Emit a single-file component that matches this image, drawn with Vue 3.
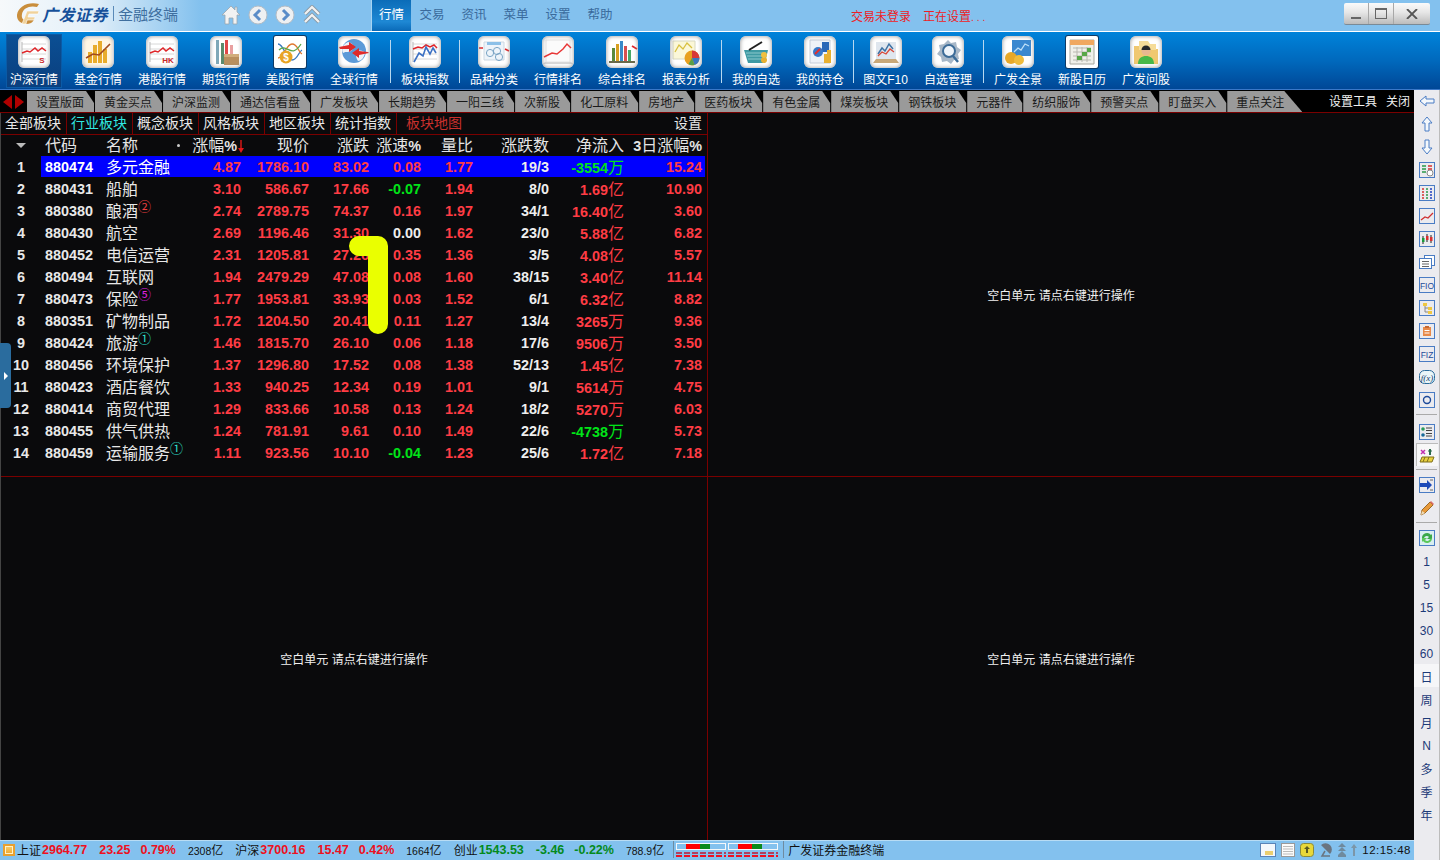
<script setup>
const gridLines = '<path d="M4 8H28M4 13H28M4 18H28M4 23H28" stroke="#d8d8d8"/><path d="M4 6V26" stroke="#bbb"/>'
const redLine = '<path d="M4 17l5-2 3 1 5-4 3 3 4-3 4 3" fill="none" stroke="#e0262a" stroke-width="1.5"/>'
const tag = (t, x) => `<text x="${x}" y="27" font-size="8" font-weight="700" fill="#c8282a" font-family="Liberation Sans" text-anchor="middle">${t}</text>`

const icons = {
  hs: gridLines + redLine + tag('S', 24),
  fund: '<rect x="2" y="2" width="28" height="28" fill="#fff6e4"/><g fill="#e8ac2c"><rect x="6" y="16" width="4" height="11"/><rect x="11" y="9" width="4" height="18"/><rect x="16" y="5" width="4" height="22"/><rect x="21" y="13" width="4" height="14"/></g><path d="M4 22l7-4 6 1 6-6 5-5" fill="none" stroke="#a04a20" stroke-width="1.6"/>',
  hk: gridLines + redLine + tag('HK', 22),
  fut: '<rect x="6" y="4" width="3" height="24" fill="#7fa8b8"/><rect x="11" y="7" width="3" height="21" fill="#5b8a6c"/><rect x="15" y="4" width="3" height="14" fill="#e04848"/><rect x="20" y="9" width="3" height="10" fill="#e8a0a0"/><path d="M14 18h15v11H14z" fill="#b98f5e"/><path d="M14 18h15v3H14z" fill="#d2ad7c"/>',
  us: '<path d="M4 8c6 0 8 16 14 16s6-8 10-10" fill="none" stroke="#3a7ac0" stroke-width="1.3"/><path d="M4 22c6 0 8-14 14-14s6 8 10 10" fill="none" stroke="#e07830" stroke-width="1.3"/><path d="M5 14c8-8 12 10 22-6" fill="none" stroke="#5aa84a" stroke-width="1.3"/><circle cx="12" cy="21" r="6.5" fill="#e8a424"/><text x="12" y="24.5" font-size="10" font-weight="700" fill="#fff" font-family="Liberation Sans" text-anchor="middle">$</text>',
  world: '<circle cx="16" cy="15" r="12" fill="#5b9ad8"/><path d="M10 6c5 1 7 5 4 8s-6 1-9 3c-2-4 0-9 5-11zM19 15c4-1 7 0 8 2-1 5-4 8-7 8-2-3-3-7-1-10z" fill="#eef3f8"/><path d="M1 11l10-2v-3l7 5-7 5v-3H2zM31 17l-10 2v3l-7-5 7-5v3l9 1z" fill="#e02a2a"/>',
  block: gridLines + '<path d="M4 13l5-2 4 1 4-3 4 2 4-2 3 3" fill="none" stroke="#e0262a" stroke-width="1.5"/><path d="M5 26l5-9 4 3 3-9 4 7 3-6 3 5" fill="none" stroke="#3e72c4" stroke-width="1.6"/>',
  kind: '<path d="M6 6h20v18H6z" fill="#eef4fa" stroke="#cdd8e2"/><path d="M9 6h14v3H9z" fill="#8cc0e8"/><circle cx="12" cy="17" r="3.6" fill="none" stroke="#7aa4c4"/><circle cx="19" cy="15" r="3.6" fill="none" stroke="#7aa4c4"/><circle cx="21" cy="21" r="3.6" fill="none" stroke="#7aa4c4"/><path d="M1 12h4M27 13l4 2" stroke="#e0262a" stroke-width="1.6"/>',
  rank: '<path d="M4 4h24v22H4z" fill="#fbfbfb" stroke="#e4e4e4"/><path d="M2 21l8-4 5 1 6-5 4-5 4 4" fill="none" stroke="#e83838" stroke-width="1.5"/><path d="M3 26h26l2 2H1z" fill="#d8d8d8"/>',
  mix: '<g><rect x="6" y="12" width="3" height="14" fill="#5a8a3c"/><rect x="10" y="8" width="3" height="18" fill="#d8a020"/><rect x="14" y="5" width="3" height="21" fill="#3a8ac8"/><rect x="18" y="10" width="3" height="16" fill="#d85050"/><rect x="22" y="14" width="3" height="12" fill="#48a868"/></g><path d="M3 26h26" stroke="#6a6a4a" stroke-width="2"/><path d="M26 10l5 3" stroke="#e0262a" stroke-width="1.6"/>',
  report: '<path d="M3 5h22v18H3z" fill="#fbf7d8" stroke="#d8d8c0"/><path d="M5 16l4-7 4 4 4-6 5 5" fill="none" stroke="#d8c040" stroke-width="1.3"/><circle cx="22" cy="22" r="7.5" fill="#e8a020"/><path d="M22 22V14.5a7.5 7.5 0 0 1 7.5 7.5z" fill="#d83838"/><path d="M22 22h7.5a7.5 7.5 0 0 1-5 7z" fill="#3a78c0"/><path d="M22 22l2.500 7a7.500 7.500 0 0 1-6-1z" fill="#58a048"/>',
  fav: '<path d="M4 14h24l-3 13H8z" fill="#3f9aa4"/><path d="M6 17h20M7 20h18M8 23h16" stroke="#8cc8cc"/><path d="M9 14L22 6" stroke="#222" stroke-width="2"/><circle cx="24" cy="24" r="3" fill="#e8b030"/><circle cx="24" cy="19" r="3" fill="#f0c040"/>',
  hold: '<path d="M6 4h20v23H6z" fill="#eef2f8" stroke="#c4ccd8"/><path d="M18 6h7v10h-7z" fill="#2a68b8"/><circle cx="14" cy="16" r="5" fill="#3878c8"/><path d="M11 18l5-5" stroke="#e03030" stroke-width="2"/><path d="M20 27v-9h3v-4h4v13z" fill="#e8b030"/>',
  f10: '<path d="M6 6h20v17H6z" fill="#dfe6ee"/><path d="M8 18l4-6 3 3 4-7 4 5" fill="none" stroke="#3e72a4" stroke-width="1.5"/><path d="M8 20l4-4 4 2 4-5 4 3" fill="none" stroke="#d84a3a" stroke-width="1.3"/><path d="M6 23h20l3 4H3z" fill="#c8a878"/>',
  manage: '<path d="M16 4l3 3 5-1 1 5 4 3-3 4 1 5-5 1-3 4-4-3-5 1-1-5-4-3 3-4-1-5 5-1z" fill="#a8b8c8"/><circle cx="17" cy="15" r="6" fill="#eef4fa" stroke="#3c6c98" stroke-width="2"/><path d="M21 20l5 6" stroke="#3c6c98" stroke-width="2.500"/>',
  view: '<path d="M10 4h19v16H10z" fill="#3a88d0"/><path d="M12 16l4-4 3 2 4-6 4 2" fill="none" stroke="#bfe0f8" stroke-width="1.300"/><circle cx="9" cy="22" r="6" fill="#e8a828"/><circle cx="17" cy="24" r="5" fill="#f0bc3c"/>',
  cal: '<path d="M4 4h24v24H4z" fill="#f0f0ea" stroke="#a8a8a0"/><path d="M4 4h24v5H4z" fill="#f0a860"/><path d="M7 12h18M7 16h18M7 20h18M7 24h18M11 11v15M16 11v15M21 11v15" stroke="#b8b8b0"/><path d="M16 16h5v4h-5zM11 20h5v4h-5z" fill="#58a848"/><path d="M21 12h4v4h-4z" fill="#58a848"/>',
  ask: '<path d="M4 10h10l2 3h12v15H4z" fill="#f0c870"/><path d="M9 5h9l2 3h6v6H9z" fill="#f6dc98"/><circle cx="16" cy="15" r="4.500" fill="#e8b890"/><path d="M11.500 14a4.500 4.500 0 0 1 9 0z" fill="#282828"/><path d="M8 28c0-6 4-8 8-8s8 2 8 8z" fill="#48b848"/>'
}

const tools = [
  { label: '沪深行情', icon: 'hs', active: true },
  { label: '基金行情', icon: 'fund' },
  { label: '港股行情', icon: 'hk' },
  { label: '期货行情', icon: 'fut' },
  { label: '美股行情', icon: 'us', framed: true },
  { label: '全球行情', icon: 'world', sep: 7 },
  { label: '板块指数', icon: 'block', sep: 5 },
  { label: '品种分类', icon: 'kind' },
  { label: '行情排名', icon: 'rank' },
  { label: '综合排名', icon: 'mix' },
  { label: '报表分析', icon: 'report', sep: 6 },
  { label: '我的自选', icon: 'fav' },
  { label: '我的持仓', icon: 'hold', sep: 3 },
  { label: '图文F10', icon: 'f10', narrow: true },
  { label: '自选管理', icon: 'manage', sep: 6 },
  { label: '广发全景', icon: 'view' },
  { label: '新股日历', icon: 'cal', framed: true },
  { label: '广发问股', icon: 'ask' }
]

const tabs = ['设置版面', '黄金买点', '沪深监测', '通达信看盘', '广发板块', '长期趋势', '一阳三线', '次新股', '化工原料', '房地产', '医药板块', '有色金属', '煤炭板块', '钢铁板块', '元器件', '纺织服饰', '预警买点', '盯盘买入', '重点关注']
const subTabs = ['全部板块', '行业板块', '概念板块', '风格板块', '地区板块', '统计指数', '板块地图']

const rows = [
  ['880474', '多元金融', '', '4.87', '1786.10', '83.02', '0.08', '1.77', '19/3', '-3554', '万', '15.24'],
  ['880431', '船舶', '', '3.10', '586.67', '17.66', '-0.07', '1.94', '8/0', '1.69', '亿', '10.90'],
  ['880380', '酿酒', '②', '2.74', '2789.75', '74.37', '0.16', '1.97', '34/1', '16.40', '亿', '3.60'],
  ['880430', '航空', '', '2.69', '1196.46', '31.30', '0.00', '1.62', '23/0', '5.88', '亿', '6.82'],
  ['880452', '电信运营', '', '2.31', '1205.81', '27.26', '0.35', '1.36', '3/5', '4.08', '亿', '5.57'],
  ['880494', '互联网', '', '1.94', '2479.29', '47.08', '0.08', '1.60', '38/15', '3.40', '亿', '11.14'],
  ['880473', '保险', '⑤', '1.77', '1953.81', '33.93', '0.03', '1.52', '6/1', '6.32', '亿', '8.82'],
  ['880351', '矿物制品', '', '1.72', '1204.50', '20.41', '0.11', '1.27', '13/4', '3265', '万', '9.36'],
  ['880424', '旅游', '①', '1.46', '1815.70', '26.10', '0.06', '1.18', '17/6', '9506', '万', '3.50'],
  ['880456', '环境保护', '', '1.37', '1296.80', '17.52', '0.08', '1.38', '52/13', '1.45', '亿', '7.38'],
  ['880423', '酒店餐饮', '', '1.33', '940.25', '12.34', '0.19', '1.01', '9/1', '5614', '万', '4.75'],
  ['880414', '商贸代理', '', '1.29', '833.66', '10.58', '0.13', '1.24', '18/2', '5270', '万', '6.03'],
  ['880455', '供气供热', '', '1.24', '781.91', '9.61', '0.10', '1.49', '22/6', '-4738', '万', '5.73'],
  ['880459', '运输服务', '①', '1.11', '923.56', '10.10', '-0.04', '1.23', '25/6', '1.72', '亿', '7.18']
]

const markColor = { '②': 'mk-red', '⑤': 'mk-pink', '①': 'mk-cyan' }

function tone(v) {
  if (v.startsWith('-')) return 'down'
  return Number(v) === 0 ? 'flat' : 'up'
}

const quotes = [
  { name: '上证', price: '2964.77', chg: '23.25', pct: '0.79%', vol: '2308', cls: 'q-red' },
  { name: '沪深', price: '3700.16', chg: '15.47', pct: '0.42%', vol: '1664', cls: 'q-red' },
  { name: '创业', price: '1543.53', chg: '-3.46', pct: '-0.22%', vol: '788.9', cls: 'q-green' }
]

const b = 'fill="none" stroke="#4a7cc4"'
const frame = `<rect x=".5" y=".5" width="15" height="15" ${b}/>`
const sideTop = [
  `<path d="M1 8l6-5v3h8v4H7v3z" fill="#f4f8fc" stroke="#4a7cc4"/>`,
  `<path d="M8 1l5 6h-3v8H6V7H3z" fill="#f4f8fc" stroke="#4a7cc4"/>`,
  `<path d="M8 15l5-6h-3V1H6v8H3z" fill="#f4f8fc" stroke="#4a7cc4"/>`,
  frame + '<path d="M3 4h4M3 7h4M3 10h4" stroke="#2a9a4a" stroke-width="1.500"/><path d="M9 4h4M9 7h4" stroke="#d83030" stroke-width="1.500"/><circle cx="11" cy="11" r="3" fill="#fff" stroke="#888"/>',
  frame + '<path d="M3 4h2M3 7h2M3 10h2M3 13h2" stroke="#d83030" stroke-width="1.500"/><path d="M7 4h2M7 7h2M7 10h2M7 13h2" stroke="#2a9a4a" stroke-width="1.500"/><path d="M11 4h2M11 7h2M11 10h2M11 13h2" stroke="#2040c0" stroke-width="1.500"/>',
  frame + '<path d="M2 12l4-3 3 1 5-5" fill="none" stroke="#d03030" stroke-width="1.300"/>',
  frame + '<path d="M4 5v8M8 3v8M12 4v8" stroke="#222"/><rect x="3" y="7" width="2.500" height="4" fill="#1a9a3a"/><rect x="7" y="5" width="2.500" height="4" fill="#d83030"/><rect x="11" y="6" width="2.500" height="4" fill="#d83030"/>',
  '<rect x="5.500" y="1.500" width="10" height="10" fill="#fff" stroke="#4a7cc4"/><rect x=".5" y="4.500" width="12" height="10" fill="#fff" stroke="#4a7cc4"/><path d="M3 7.500h7M3 10h7M3 12.500h7" stroke="#666"/>',
  frame + '<text x="8" y="11.500" font-size="8.500" font-family="Liberation Sans" text-anchor="middle" fill="#1d4a9a">FIO</text>',
  frame + '<path d="M4 3h4v3H4zM9 7h4v3H9zM9 11h4v3H9z" fill="#f0c840"/><path d="M6 6v6h3M6 8h3" fill="none" stroke="#888"/>',
  frame + '<rect x="4" y="4" width="8" height="9" fill="#e88a4a"/><path d="M6 3h4v2H6z" fill="#c86830"/><path d="M5.500 7.500h5M5.500 10h5" stroke="#fff"/>',
  frame + '<text x="8" y="11.500" font-size="8.500" font-family="Liberation Sans" text-anchor="middle" fill="#1d4a9a">FIZ</text>',
  '<rect x=".5" y="1.500" width="15" height="13" rx="5" fill="#eaf6f8" stroke="#2a6a9a"/><text x="8" y="11.500" font-size="9" font-style="italic" font-family="Liberation Serif" text-anchor="middle" fill="#123a6a">f(x)</text>',
  frame + '<circle cx="8" cy="8" r="3.500" fill="none" stroke="#1d4a9a" stroke-width="1.400"/>'
]
const sideMid = [
  frame + '<circle cx="4" cy="5" r="1.800" fill="#2a9a5a"/><circle cx="4" cy="11" r="1.800" fill="#1a6a9a"/><path d="M7 4h6M7 6.500h6M7 9.500h6M7 12h6" stroke="#444"/>',
  '<path d="M2 3l4 4M6 3L2 7" stroke="#c030b0" stroke-width="1.500"/><path d="M11 2v6" stroke="#2a6a4a" stroke-width="2"/><path d="M9 4h4" stroke="#2a6a4a"/><path d="M3 10h12l-2 5H1z" fill="#e8d040" stroke="#80701a"/><path d="M6 10l-2 5M10 10l-2 5" stroke="#80701a"/>'
]
const sideLow = [
  frame + '<path d="M1 6h7V3l5 5-5 5v-3H1z" fill="#1d4ab8"/><path d="M11 3h3M11 13h3" stroke="#666"/>',
  '<path d="M2 15l1-5L11 2l3 3-8 8z" fill="#e89a3a" stroke="#9a6a2a"/><path d="M11 2l3 3 1-1-3-3z" fill="#e06a6a"/><path d="M2 15l1-4 3 2z" fill="#f0dcb8"/>'
]
const refresh = frame + '<rect x="1" y="1" width="14" height="14" fill="#d8eef0"/><path d="M3 8a5 5 0 0 1 9-3l1-1v5H8l2-2a3 3 0 0 0-5 1z" fill="#3aa84a"/><path d="M13 8a5 5 0 0 1-9 3l-1 1V8h5l-2 2a3 3 0 0 0 5-1z" fill="#5ac85a"/>'
const periods = ['1', '5', '15', '30', '60', '日', '周', '月', 'N', '多', '季', '年']
</script>

<template>
  <div class="app">
    <header class="titlebar">
      <div class="brand">
        <svg class="logo" width="26" height="26" viewBox="0 0 26 26">
          <path d="M24 3C14 0 3 5 2 14c-.5 7 7 11 14 8 2-1 3-3 4-6h-6l-1 3c-4 1-7-1-6-6 1-6 8-9 15-7z" fill="#c98e3c"/>
          <path d="M12 10h12l-1 3h-9l-1 3h7l-1 3h-7l-1 4H7z" fill="#f0d29a" stroke="#fff" stroke-width=".6"/>
        </svg>
        <span class="brand-name">广发证券</span>
        <span class="brand-line"></span>
        <span class="brand-sub">金融终端</span>
      </div>
      <div class="nav-icons">
        <svg width="20" height="20" viewBox="0 0 20 20"><path d="M10 1L1 10h3v9h4v-6h4v6h4v-9h3l-3-3V2h-2v3z" fill="#f2f2f2" stroke="#9aa6ae" stroke-width=".8"/></svg>
        <svg width="20" height="20" viewBox="0 0 20 20"><circle cx="10" cy="10" r="9" fill="#eef0f2" stroke="#b4bcc4"/><path d="M12 5l-5 5 5 5" fill="none" stroke="#5a8cc8" stroke-width="3"/></svg>
        <svg width="20" height="20" viewBox="0 0 20 20"><circle cx="10" cy="10" r="9" fill="#eef0f2" stroke="#b4bcc4"/><path d="M8 5l5 5-5 5" fill="none" stroke="#5a8cc8" stroke-width="3"/></svg>
        <svg width="20" height="20" viewBox="0 0 20 20"><path d="M3 9l7-7 7 7M3 17l7-7 7 7" fill="none" stroke="#8a9aa6" stroke-width="4"/><path d="M3 9l7-7 7 7M3 17l7-7 7 7" fill="none" stroke="#f2f2f2" stroke-width="2.200"/></svg>
      </div>
      <div class="menu-tab active">行情</div>
      <div class="menu-tab">交易</div>
      <div class="menu-tab">资讯</div>
      <div class="menu-tab">菜单</div>
      <div class="menu-tab">设置</div>
      <div class="menu-tab">帮助</div>
      <div class="login">交易未登录</div>
      <div class="setting-state">正在设置<span class="dots">...</span></div>
      <div class="win-btns">
        <span class="win-btn min"><i></i></span>
        <span class="win-btn max"><i></i></span>
        <span class="win-btn close">
          <svg width="12" height="10" viewBox="0 0 12 10"><path d="M1 0l10 10M11 0L1 10" stroke="#555" stroke-width="1.800"/></svg>
        </span>
      </div>
    </header>

    <nav class="toolbar">
      <template v-for="t in tools" :key="t.label">
        <div :class="['tool', { active: t.active, narrow: t.narrow }]">
          <div class="tool-in">
            <div :class="['tile', { framed: t.framed }]">
              <svg width="32" height="32" viewBox="0 0 32 32" v-html="icons[t.icon]"></svg>
            </div>
            <div class="tool-label">{{ t.label }}</div>
          </div>
        </div>
        <div v-if="t.sep" class="tool-sep" :style="{ width: t.sep + 'px' }"></div>
      </template>
    </nav>

    <div class="work">
      <div class="left">
        <div class="tabbar">
          <div class="tab-arrows"><i class="arr-l"></i><i class="arr-r"></i></div>
          <div v-for="(t, i) in tabs" :key="t" :class="['tab', { last: i === tabs.length - 1 }]">{{ t }}</div>
          <div class="tab-tools"><span>设置工具</span><span>关闭</span></div>
        </div>

        <div class="quads">
          <section class="quad q-a">
            <div class="subtabs">
              <div v-for="(s, i) in subTabs" :key="s" :class="['subtab', { on: i === 1, map: i === 6 }]">{{ s }}</div>
              <div class="subtab-set">设置</div>
            </div>

            <div class="line head">
              <div class="idx"><i class="sort"></i></div>
              <div class="body">
                <div class="c code">代码</div>
                <div class="c name">名称<i class="dot"></i></div>
                <div class="c num">涨幅<b>%</b><svg class="down-arrow" width="6" height="13" viewBox="0 0 6 13"><path d="M3 0v9" stroke="#e01818" stroke-width="1.400"/><path d="M0 8h6l-3 5z" fill="#e01818"/></svg></div>
                <div class="c num">现价</div>
                <div class="c num">涨跌</div>
                <div class="c num">涨速<b>%</b></div>
                <div class="c num">量比</div>
                <div class="c num">涨跌数</div>
                <div class="c num">净流入</div>
                <div class="c num"><b>3</b>日涨幅<b>%</b></div>
              </div>
            </div>

            <div v-for="(r, i) in rows" :key="r[0]" :class="['line', 'row', { active: i === 0 }]">
              <div class="idx">{{ i + 1 }}</div>
              <div class="body">
                <div class="c code">{{ r[0] }}</div>
                <div class="c name">{{ r[1] }}<span v-if="r[2]" :class="['mark', markColor[r[2]]]">{{ r[2] }}</span></div>
                <div class="c num up">{{ r[3] }}</div>
                <div class="c num up">{{ r[4] }}</div>
                <div class="c num up">{{ r[5] }}</div>
                <div :class="['c', 'num', tone(r[6])]">{{ r[6] }}</div>
                <div class="c num up">{{ r[7] }}</div>
                <div class="c num flat">{{ r[8] }}</div>
                <div :class="['c', 'num', tone(r[9])]">{{ r[9] }}<span class="unit">{{ r[10] }}</span></div>
                <div class="c num up">{{ r[11] }}</div>
              </div>
            </div>
          </section>
          <section class="quad q-b"><span>空白单元 请点右键进行操作</span></section>
          <section class="quad q-c"><span>空白单元 请点右键进行操作</span></section>
          <section class="quad q-d"><span>空白单元 请点右键进行操作</span></section>

          <div class="handle"><i></i></div>
          <svg class="note" width="60" height="110" viewBox="0 0 60 110">
            <path d="M14 15H33V93" fill="none" stroke="#eaff00" stroke-width="20" stroke-linecap="round" stroke-linejoin="round"/>
          </svg>
        </div>

        <footer class="statusbar">
          <span class="st-icon"></span>
          <div v-for="q in quotes" :key="q.name" class="quote">
            <span class="q-name">{{ q.name }}</span>
            <b :class="q.cls">{{ q.price }}</b>
            <b :class="['q-chg', q.cls]">{{ q.chg }}</b>
            <b :class="['q-pct', q.cls]">{{ q.pct }}</b>
            <span class="q-vol">{{ q.vol }}<span class="q-unit">亿</span></span>
          </div>
          <span class="st-sep"></span>
          <div class="meter" v-for="n in 2" :key="n"><div class="meter-box"><i class="m-red"></i><i class="m-green"></i></div><div class="meter-dash"></div></div>
          <span class="st-sep second"></span>
          <span class="st-title">广发证券金融终端</span>
          <div class="st-right">
            <svg width="16" height="14" viewBox="0 0 16 14"><rect x=".5" y=".5" width="15" height="13" fill="#f4f8fc" stroke="#5a84b8"/><path d="M5 9h8M5 11h8" stroke="#e8c040" stroke-width="1.500"/></svg>
            <svg width="14" height="14" viewBox="0 0 14 14"><rect x=".5" y=".5" width="13" height="13" fill="#fbfbfb" stroke="#999"/><path d="M2 3.500h10M2 6h10M2 8.500h10M2 11h10" stroke="#bbb"/></svg>
            <svg width="14" height="14" viewBox="0 0 14 14"><rect x=".5" y=".5" width="13" height="13" rx="3" fill="#e8d83a" stroke="#8a8a3a"/><path d="M7 3l3 3H8v4H6V6H4z" fill="#5a5a20"/></svg>
            <svg width="14" height="14" viewBox="0 0 14 14"><path d="M2 2l9 9a6 6 0 0 0-9-9z" fill="#6a7480"/><path d="M6 8l-3 5h8" fill="none" stroke="#6a7480" stroke-width="1.500"/></svg>
            <svg width="8" height="14" viewBox="0 0 8 14"><path d="M4 0l4 4H0zM4 4l4 4H0zM4 8l4 4H0z" fill="#6f8a9e"/><rect y="12" width="8" height="2" fill="#6f8a9e"/></svg>
            <svg width="6" height="14" viewBox="0 0 6 14"><path d="M3 1l3 4H4v8H2V5H0z" fill="#7c96a8"/></svg>
            <span class="clock">12:15:48</span>
          </div>
        </footer>
      </div>

      <aside class="sidebar">
        <div v-for="(s, i) in sideTop" :key="i" class="side-item top">
          <svg width="16" height="16" viewBox="0 0 16 16" v-html="s"></svg>
        </div>
        <div class="side-sep tall"></div>
        <div v-for="(s, i) in sideMid" :key="i" :class="['side-item', { raised: i === 1 }]">
          <svg width="16" height="16" viewBox="0 0 16 16" v-html="s"></svg>
        </div>
        <div class="side-sep"></div>
        <div v-for="(s, i) in sideLow" :key="i" class="side-item">
          <svg width="16" height="16" viewBox="0 0 16 16" v-html="s"></svg>
        </div>
        <div class="side-sep"></div>
        <div class="side-item"><svg width="16" height="16" viewBox="0 0 16 16" v-html="refresh"></svg></div>
        <div v-for="p in periods" :key="p" :class="['side-item', 'period', { on: p === '日' }]">{{ p }}</div>
      </aside>
    </div>
  </div>
</template>

<style>
html, body {
  margin: 0;
  background: #000;
  overflow: hidden;
}
</style>

<style scoped>
.app {
  width: 1440px;
  height: 860px;
  display: flex;
  flex-direction: column;
  overflow: hidden;
  font-family: "Liberation Sans", "Noto Sans CJK SC", sans-serif;
  font-size: 12px;
  background: #0a0a0c;
}

/* title bar */
.titlebar {
  height: 31px;
  border-bottom: 1px solid #fff;
  display: flex;
  align-items: center;
  background: linear-gradient(90deg, #f6f9fb 0, #e4f0f9 90px, #83c1ee 200px);
  flex-shrink: 0;
}

.brand {
  width: 221px;
  padding-left: 15px;
  padding-bottom: 4px;
  box-sizing: border-box;
  display: flex;
  align-items: center;
}

.logo {
  flex-shrink: 0;
}

.brand-name {
  margin-left: 1px;
  font-size: 16px;
  font-weight: 700;
  font-style: italic;
  color: #16509a;
  letter-spacing: .5px;
}

.brand-line {
  width: 1px;
  height: 15px;
  margin: 0 4px 0 5px;
  background: #5a8ab8;
}

.brand-sub {
  font-size: 15px;
  color: #3f6f9f;
}

.nav-icons {
  width: 150px;
  display: flex;
  gap: 7px;
  align-items: center;
  padding-bottom: 2px;
}

.menu-tab {
  width: 42px;
  text-align: center;
  font-size: 12.500px;
  color: #3a6a9c;
  line-height: 31px;
}

.menu-tab.active {
  width: 40px;
  color: #fff;
  background: linear-gradient(180deg, #0b6cb8, #1e88d4 70%, #0a6ab8);
  border-left: 1px solid #a8d4f2;
  box-sizing: border-box;
}

.login {
  margin-left: 230px;
  color: #ee1c25;
}

.setting-state {
  margin-left: 12px;
  color: #ee1c25;
}

.dots {
  letter-spacing: 3px;
  font-size: 10px;
}

.win-btns {
  margin-left: auto;
  margin-right: 10px;
  margin-bottom: 3px;
  display: flex;
  height: 21px;
  background: linear-gradient(180deg, #fafafa, #e6e6e6 45%, #bcbcbc);
  border-radius: 2px;
  border-bottom: 1px solid #7a8a96;
}

.win-btn {
  display: flex;
  align-items: center;
  justify-content: center;
  width: 25px;
  border-right: 1px solid #a8a8a8;
  box-sizing: border-box;
}

.win-btn.close {
  width: 36px;
  border-right: 0;
}

.win-btn.min i {
  width: 10px;
  height: 2px;
  margin-top: 8px;
  background: #666;
}

.win-btn.max i {
  width: 10px;
  height: 8px;
  border: 1px solid #666;
  border-top-width: 2px;
}

/* toolbar */
.toolbar {
  height: 58px;
  flex-shrink: 0;
  box-sizing: border-box;
  padding-left: 2px;
  display: flex;
  background: linear-gradient(180deg, #0083da, #0069bd 50%, #004796);
  border-bottom: 1px solid #3a78c8;
}

.tool {
  width: 64px;
  flex-shrink: 0;
  padding-top: 2px;
}

.tool.narrow {
  width: 61px;
}

.tool-in {
  width: 56px;
  height: 54px;
  margin: 0 auto;
  box-sizing: border-box;
  padding-top: 2px;
  display: flex;
  flex-direction: column;
  align-items: center;
}

.tool.active .tool-in {
  background: linear-gradient(180deg, #0b4f94, #0a3f7e);
  box-shadow: inset 0 0 0 1px #0a5aa6;
}

.tile {
  width: 32px;
  height: 32px;
  border-radius: 6px;
  background: #fff;
  overflow: hidden;
  flex-shrink: 0;
  position: relative;
}

.tile::after {
  content: "";
  position: absolute;
  inset: 0;
  border-radius: 6px;
  box-shadow: inset 0 0 4px #8c8c8c;
}

.tile svg {
  display: block;
}

.tile.framed {
  border-radius: 2px;
  box-shadow: 0 0 0 1px #0d3a66;
}

.tile.framed::after {
  display: none;
}

.tool-label {
  margin-top: 4px;
  line-height: 16px;
  color: #fff;
  white-space: nowrap;
}

.tool-sep {
  flex-shrink: 0;
  margin: 8px 0 6px;
  background: linear-gradient(#b8d8f0, #b8d8f0) 60% 0 / 1px 100% no-repeat;
}

/* working area */
.work {
  flex: 1;
  display: flex;
  min-height: 0;
}

.left {
  width: 1414px;
  display: flex;
  flex-direction: column;
  flex-shrink: 0;
}

.tabbar {
  height: 23px;
  flex-shrink: 0;
  box-sizing: border-box;
  display: flex;
  background: #000;
  border-bottom: 1px solid #7a0000;
  padding-left: 3px;
  padding-top: 1px;
}

.tab-arrows {
  width: 24px;
  display: flex;
  align-items: center;
  gap: 3px;
}

.tab-arrows i {
  width: 0;
  height: 0;
  border-top: 7px solid transparent;
  border-bottom: 7px solid transparent;
}

.arr-l {
  border-right: 9px solid #b00000;
}

.arr-r {
  border-left: 9px solid #b00000;
}

.tab {
  padding: 0 11px 0 9px;
  height: 21px;
  line-height: 24px;
  color: #1a1a1a;
  background: #9a9a9a;
  clip-path: polygon(0 0, calc(100% - 9px) 0, calc(100% - 1px) 12px, calc(100% - 1px) 100%, 0 100%);
  white-space: nowrap;
}

.tab.last {
  padding-right: 18px;
  clip-path: polygon(0 0, calc(100% - 18px) 0, 100% 100%, 0 100%);
}

.tab-tools {
  margin-left: auto;
  padding-right: 4px;
  display: flex;
  gap: 9px;
  color: #f0f0f0;
  line-height: 22px;
}

.quads {
  flex: 1;
  min-height: 0;
  display: grid;
  grid-template-columns: 707px 706px;
  grid-template-rows: 364px 363px;
  position: relative;
  border-left: 1px solid #444;
  box-sizing: border-box;
}

.quad {
  box-sizing: border-box;
  color: #f0f0f0;
  display: flex;
  align-items: center;
  justify-content: center;
}

.q-a {
  display: block;
  border-right: 1px solid #7a0000;
  border-bottom: 1px solid #7a0000;
}

.q-b {
  border-bottom: 1px solid #7a0000;
}

.q-c {
  border-right: 1px solid #7a0000;
}

.subtabs {
  height: 22px;
  box-sizing: border-box;
  display: flex;
  border-bottom: 1px solid #7a0000;
}

.subtab {
  width: 66px;
  box-sizing: border-box;
  padding-left: 4px;
  border-right: 1px solid #7a0000;
  font-size: 14px;
  line-height: 20px;
  color: #e8e8e8;
  white-space: nowrap;
}

.subtab.on {
  color: #30e8e0;
}

.subtab.map {
  padding-left: 9px;
  color: #c8302c;
  border-right: 0;
}

.subtab-set {
  margin-left: auto;
  padding-right: 5px;
  font-size: 14px;
  line-height: 20px;
  color: #e8e8e8;
}

.line {
  display: flex;
  height: 22px;
  color: #e8e8e8;
}

.line.head {
  height: 21px;
}

.idx {
  width: 40px;
  flex-shrink: 0;
  text-align: center;
  font-size: 14.400px;
  font-weight: 700;
  line-height: 21px;
}

.row .idx {
  line-height: 23px;
}

.sort {
  display: inline-block;
  width: 0;
  height: 0;
  margin-bottom: 2px;
  border-left: 5px solid transparent;
  border-right: 5px solid transparent;
  border-top: 5px solid #bbb;
}

.body {
  width: 664px;
  height: 21px;
  display: grid;
  grid-template-columns: 65px 70px 65px 68px 60px 52px 52px 76px 75px 78px;
  line-height: 21px;
}

.row .body {
  line-height: 23px;
}

.row .c {
  font-size: 14.400px;
  font-weight: 700;
}

.head .c {
  font-size: 16px;
  color: #e4e4e4;
  white-space: nowrap;
}

.head b {
  font-size: 14.400px;
}

.c.code {
  padding-left: 4px;
}

.c.name,
.row .c.name {
  font-size: 16px;
  font-weight: 400;
  white-space: nowrap;
  position: relative;
}

.dot {
  position: absolute;
  left: 71px;
  top: 9px;
  width: 3px;
  height: 3px;
  border-radius: 50%;
  background: #ccc;
}

.mark {
  font-size: 13px;
  line-height: 0;
  vertical-align: 6px;
}

.mk-red {
  color: #f04040;
}

.mk-pink {
  color: #e020e0;
}

.mk-cyan {
  color: #30e0d0;
}

.num {
  text-align: right;
  white-space: nowrap;
}

.down-arrow {
  margin-left: 1px;
  margin-right: -3px;
  vertical-align: -2px;
}

.up {
  color: #ff3c44;
}

.down {
  color: #00e418;
}

.flat {
  color: #eeeeee;
}

.unit {
  font-size: 16px;
  font-weight: 400;
}

.active .body {
  background: #0000ff;
}

.active .c.code,
.active .c.name {
  color: #fff;
}

.handle {
  position: absolute;
  left: -1px;
  top: 230px;
  width: 11px;
  height: 65px;
  border-radius: 0 4px 4px 0;
  background: #2a6c9e;
  display: flex;
  align-items: center;
  justify-content: center;
}

.handle i {
  width: 0;
  height: 0;
  border-top: 4px solid transparent;
  border-bottom: 4px solid transparent;
  border-left: 4px solid #fff;
}

.note {
  position: absolute;
  left: 344px;
  top: 118px;
}

/* status bar */
.statusbar {
  height: 20px;
  flex-shrink: 0;
  box-sizing: border-box;
  display: flex;
  align-items: center;
  padding-left: 3px;
  padding-bottom: 2px;
  background: #83c1ee;
  border-top: 1px solid #b8dcf4;
  color: #111;
  white-space: nowrap;
}

.st-icon {
  width: 12px;
  height: 12px;
  margin-right: 2px;
  box-sizing: border-box;
  background: linear-gradient(#f8d070, #f0a830);
  border: 2px solid #e8a030;
  box-shadow: inset 0 0 0 1px #fff3c8;
}

.quote {
  display: flex;
  align-items: center;
}

.quote + .quote {
  margin-left: 12px;
}

.q-name {
  margin-right: 1px;
}

.quote b {
  font-size: 12.500px;
}

.q-red {
  color: #ee1020;
}

.q-green {
  color: #048a1c;
}

.q-chg {
  margin-left: 12px;
}

.q-pct {
  margin-left: 10px;
}

.q-vol {
  margin-left: 12px;
  font-size: 10.500px;
  color: #111;
}

.q-unit {
  font-size: 12px;
}

.st-sep {
  width: 1px;
  align-self: stretch;
  margin: 0 2px 0 9px;
  background: #6f8ba0;
}

.st-sep.second {
  margin: 0 4px 0 3px;
}

.meter {
  width: 50px;
  margin-right: 2px;
}

.meter-box {
  height: 7px;
  box-sizing: border-box;
  border: 1px solid #f4f8fb;
  display: flex;
  padding-left: 9px;
}

.m-red {
  width: 14px;
  background: #f00;
}

.m-green {
  width: 10px;
  background: #0a8a1a;
}

.meter-dash {
  height: 5px;
  margin-top: 2px;
  background:
    repeating-linear-gradient(90deg, #f01020 0 6px, transparent 6px 8px) 0 3px / 100% 2px no-repeat,
    repeating-linear-gradient(90deg, #b04060 0 6px, transparent 6px 8px) 0 0 / 100% 2px no-repeat;
}

.st-title {
  color: #111;
}

.st-right {
  margin-left: auto;
  display: flex;
  align-items: center;
  gap: 5px;
  padding-right: 3px;
}

.clock {
  letter-spacing: .5px;
  font-size: 11.500px;
  color: #111;
}

/* right sidebar */
.sidebar {
  flex: 1;
  display: flex;
  flex-direction: column;
  background: #ebebef;
  border-right: 1px solid #bcbcbc;
  box-sizing: border-box;
}

.side-item {
  height: 23px;
  flex-shrink: 0;
  display: flex;
  align-items: center;
  justify-content: center;
}

.side-item.top:first-child {
  margin-top: -1px;
}

.side-item.raised {
  box-shadow: inset 1px 1px 0 #bbb;
  background: #f7f7f7;
  margin-left: 2px;
  margin-right: 1px;
}

.period {
  color: #1d3a78;
  font-size: 12px;
  padding-top: 2px;
  box-sizing: border-box;
}

.period.on {
  background: #f6f6f8;
}

.side-sep {
  height: 7px;
  flex-shrink: 0;
  margin: 0 2px;
  background: linear-gradient(#aaa, #aaa) 0 3px / 100% 1px no-repeat;
}

.side-sep.tall {
  height: 9px;
}
</style>
